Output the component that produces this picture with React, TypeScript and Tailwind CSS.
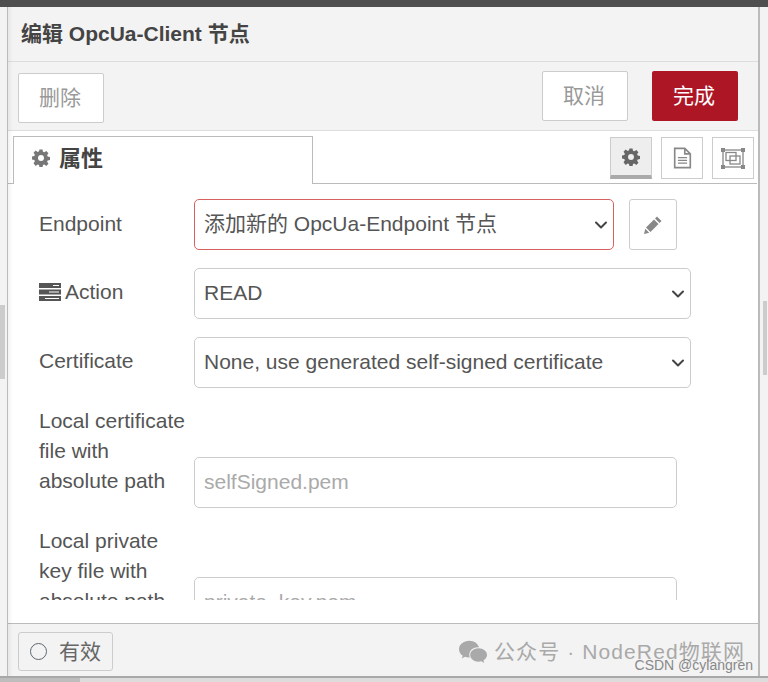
import { ChevronDown } from "lucide-react"

const sans = "font-['Liberation_Sans','Noto_Sans_CJK_SC',sans-serif]"

function Cog({ className }: { className: string }) {
  return (
    <svg viewBox="0 0 20 20" className={className} fill="currentColor">
      <path fillRule="evenodd" d="M8.300 .5h3.400l.5 2.600 1.500.6 2.200-1.500 2.400 2.400-1.500 2.200.6 1.500 2.600.5v3.400l-2.600.5-.6 1.500 1.500 2.200-2.400 2.400-2.200-1.500-1.500.6-.5 2.600H8.300l-.5-2.600-1.500-.6-2.200 1.500L1.700 15.900l1.500-2.200-.6-1.500L0 11.700V8.300l2.600-.5.6-1.500-1.500-2.200L4.100 1.700l2.200 1.500 1.500-.6zM10 6.700a3.300 3.300 0 1 0 0 6.600 3.300 3.300 0 0 0 0-6.600z" />
    </svg>
  )
}

function SelectBox({ text, red }: { text: string; red?: boolean }) {
  return (
    <div className={`flex h-[51px] flex-1 items-center justify-between rounded-[5px] border bg-white pl-[9px] pr-[2px] text-[21px] text-[#555] ${red ? "border-[#d6615f]" : "border-[#ccc]"}`}>
      <span className="whitespace-nowrap pb-[2px]">{text}</span>
      <ChevronDown size={20} strokeWidth={2.400} className="text-[#444]" />
    </div>
  )
}

export default function App() {
  return (
    <div className={`flex h-[682px] w-[768px] flex-col overflow-hidden bg-[#f3f3f3] ${sans}`}>
      <div className="h-[7px] shrink-0 bg-[#4f4f4f]" />
      <div className="flex min-h-0 flex-1">
        <div className="w-[8px] shrink-0 border-r border-[#bbb] bg-[#f3f3f3]">
          <div className="mt-[298px] h-[74px] w-[5px] bg-[#ccc]" />
        </div>
        <div className="relative flex w-[752px] shrink-0 flex-col border-r-[2px] border-[#bbb] bg-white">
          <div className="flex h-[55px] shrink-0 items-center border-b border-[#ddd] bg-[#f3f3f3] pl-[13px] text-[21px] font-bold text-[#444]">
            编辑 OpcUa-Client 节点
          </div>
          <div className="flex h-[69px] shrink-0 items-start justify-between border-b border-[#ddd] bg-[#f3f3f3] pl-[10px] pr-[20px]">
            <div className="mt-[11px] flex h-[50px] w-[86px] items-center justify-center rounded-[2px] border border-[#ccc] bg-white pr-[2px] text-[21px] text-[#999]">删除</div>
            <div className="mt-[9px] flex gap-6">
              <div className="flex h-[50px] w-[86px] items-center justify-center rounded-[2px] border border-[#ccc] bg-white pr-[2px] text-[21px] text-[#999]">取消</div>
              <div className="flex h-[50px] w-[86px] items-center justify-center rounded-[2px] bg-[#ad1625] pr-[2px] text-[21px] text-white">完成</div>
            </div>
          </div>
          <div className="flex h-[52px] shrink-0 items-end justify-between pl-[5px] pr-[4px]">
            <div className="relative z-10 -mb-px flex h-[48px] w-[300px] items-center gap-[9px] border border-b-0 border-[#bbb] bg-white pb-[5px] pl-[18px] text-[22px] font-bold text-[#444]">
              <Cog className="h-[18px] w-[18px] text-[#777]" />
              属性
            </div>
            <div className="mb-[4px] flex gap-[9px]">
              <div className="flex h-[42px] w-[42px] items-center justify-center border border-b-[4px] border-[#ccc] border-b-[#aaa] bg-[#eee]">
                <Cog className="h-[18px] w-[18px] text-[#666]" />
              </div>
              <div className="flex h-[42px] w-[42px] items-center justify-center border border-[#ccc] bg-white">
                <svg viewBox="0 0 20 24" className="h-[22px] w-[19px] text-[#888]" fill="none" stroke="currentColor" strokeWidth="1.800">
                  <path d="M1.500 1.500h11l6 6v15h-17zM12.500 1.500v6h6" />
                  <path d="M5 11.500h10M5 14.500h10M5 17.500h10" strokeWidth="1.300" />
                </svg>
              </div>
              <div className="flex h-[42px] w-[42px] items-center justify-center border border-[#ccc] bg-white">
                <svg viewBox="0 0 24 21" className="h-[21px] w-[24px] text-[#888]" fill="none" stroke="currentColor" strokeWidth="1.300">
                  <rect x="2" y="2" width="20" height="17" />
                  <rect x="5" y="4.500" width="10" height="8" />
                  <rect x="9" y="8" width="10" height="8" />
                  <g fill="currentColor" stroke="none">
                    <rect x="0" y="0" width="4" height="4" />
                    <rect x="20" y="0" width="4" height="4" />
                    <rect x="0" y="17" width="4" height="4" />
                    <rect x="20" y="17" width="4" height="4" />
                  </g>
                </svg>
              </div>
            </div>
          </div>
          <div className="mr-[1px] h-px shrink-0 bg-[#bbb]" />
          <div className="h-[416px] shrink-0 overflow-hidden pl-[31px] text-[21px] text-[#555]">
            <div className="mt-[15px] flex items-center">
              <div className="w-[155px] pb-[2px]">Endpoint</div>
              <div className="flex w-[420px]"><SelectBox text="添加新的 OpcUa-Endpoint 节点" red /></div>
              <div className="ml-[15px] flex h-[51px] w-[48px] items-center justify-center rounded-[3px] border border-[#ccc] bg-white">
                <svg viewBox="0 0 18 18" className="h-[18px] w-[18px]" fill="#888">
                  <path d="M13 0.500l4.500 4.500-2 2L11 2.500zM10 3.500L14.500 8l-8 8-4.500-4.500zM1.300 12.800l3.900 3.900L0 18z" />
                </svg>
              </div>
            </div>
            <div className="mt-[18px] flex items-center">
              <div className="flex w-[155px] items-center gap-[4px] pb-[4px]">
                <svg viewBox="0 0 22 18" className="h-[18px] w-[22px] text-[#555]" fill="currentColor">
                  <path fillRule="evenodd" d="M0 0h22v5H0zM14 2v1h6V2zM0 6.500h22v5H0zM10 8.500v1h10v-1zM0 13h22v5H0zM6 15v1h14v-1z" />
                </svg>
                Action
              </div>
              <div className="flex w-[497px]"><SelectBox text="READ" /></div>
            </div>
            <div className="mt-[18px] flex items-center">
              <div className="w-[155px] pb-[4px]">Certificate</div>
              <div className="flex w-[497px]"><SelectBox text="None, use generated self-signed certificate" /></div>
            </div>
            <div className="mt-[18px] flex items-start">
              <div className="w-[155px] leading-[30px]">Local certificate<br />file with<br />absolute path</div>
              <div className="mt-[51px] flex h-[51px] w-[483px] items-center rounded-[5px] border border-[#ccc] bg-white pb-[2px] pl-[9px] text-[#aaa]">selfSigned.pem</div>
            </div>
            <div className="mt-[18px] flex items-start">
              <div className="w-[155px] leading-[30px]">Local private<br />key file with<br />absolute path</div>
              <div className="mt-[51px] flex h-[51px] w-[483px] items-center rounded-[5px] border border-[#ccc] bg-white pb-[2px] pl-[9px] text-[#aaa]">private_key.pem</div>
            </div>
          </div>
          <div className="min-h-0 flex-1 bg-white" />
          <div className="relative flex h-[53px] shrink-0 items-start border-t border-[#bbb] bg-[#f3f3f3] pl-[10px]">
            <div className="mt-[8px] flex h-[39px] w-[95px] items-center gap-[12px] rounded-[3px] border border-[#ccc] pl-[11px] text-[21px] text-[#666]">
              <span className="h-[17px] w-[17px] rounded-full border-[1.500px] border-[#5c6770]" />
              有效
            </div>
            <div className="absolute right-[13px] top-[12px] flex items-center gap-[7px] text-[21px] tracking-[1.100px] text-[#a9a9a9]">
              <svg viewBox="0 0 30 24" className="h-[24px] w-[28px]" fill="#a9a9a9">
                <path d="M11 0C5 0 0 4 0 9c0 3 1.600 5.300 4 7l-1 3 3.500-1.800c1.300.4 2.500.6 4 .6h1c-.3-.9-.5-1.800-.5-2.800 0-4.600 4.200-8 9.500-8h1C20.300 3 16 0 11 0z" />
                <path d="M21 8c-5 0-9 3.200-9 7.200s4 7.200 9 7.200c1 0 2-.1 3-.4l3 1.800-.8-2.800c2.300-1.400 3.800-3.500 3.800-5.800C30 11.200 26 8 21 8z" />
              </svg>
              公众号 · NodeRed物联网
            </div>
            <div className="absolute right-[5px] top-[33px] text-[14px] leading-[16px] text-[#888]">CSDN @cylangren</div>
          </div>
          <div className="pointer-events-none absolute inset-y-0 left-0 w-[5px] bg-gradient-to-r from-black/5 to-transparent" />
        </div>
        <div className="flex-1 bg-[#f3f3f3]">
          <div className="ml-[3px] mt-[294px] h-[74px] w-[4px] bg-[#ccc]" />
        </div>
      </div>
      <div className="flex h-[6px] shrink-0 border-t-[2px] border-[#a8a8a8]">
        <div className="w-[80px] bg-[#bdbdbd]" />
        <div className="flex-1 bg-[#dcdcdc]" />
      </div>
    </div>
  )
}
